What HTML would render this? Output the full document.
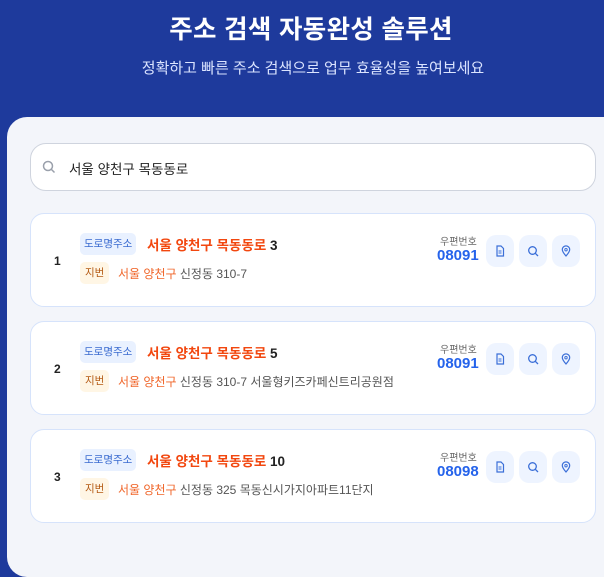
<!DOCTYPE html><html><head><meta charset="utf-8"><style>
*{margin:0;padding:0;box-sizing:border-box}
body{width:604px;height:528px;overflow:hidden;background:#1e3a9c;font-family:"Liberation Sans","Noto Sans CJK KR",sans-serif;position:relative}
h1{position:absolute;top:9px;left:0;width:622px;text-align:center;color:#fff;font-size:25.5px;font-weight:700;letter-spacing:0.3px}
.sub{position:absolute;top:57px;left:0;width:626px;text-align:center;color:#dbe4ff;font-size:15px}
.panel{position:absolute;left:7px;top:117px;width:640px;height:460px;background:#f3f5fa;border-radius:20px}
.search{position:absolute;left:30px;top:143px;width:566px;height:48px;background:#fff;border:1.5px solid #cfd4de;border-radius:16px}
.search span{position:absolute;left:38px;top:14px;font-size:13.5px;color:#222}
.search svg{position:absolute;left:11px;top:16px}
.card{position:absolute;left:30px;width:566px;height:94px;background:#fff;border:1.5px solid #d6e3fb;border-radius:14px}
.num{position:absolute;left:23px;top:40px;font-size:12px;font-weight:700;color:#222}
.b1{position:absolute;left:49px;top:19px;height:22px;padding:0 4px;line-height:22px;font-size:10.5px;color:#3a6bd0;background:#e9f1ff;border-radius:5px}
.t{position:absolute;left:116px;top:20px;font-size:13.5px;font-weight:700;color:#f2470f}
.t b{color:#222}
.b2{position:absolute;left:49px;top:48px;height:22px;padding:0 5px;line-height:22px;font-size:10.5px;color:#b45a14;background:#fff6e5;border-radius:5px}
.l2{position:absolute;left:87px;top:51px;font-size:12px;color:#555}
.l2 em{font-style:normal;color:#f0662a}
.pl{position:absolute;left:409px;top:19px;font-size:10px;color:#666}
.pn{position:absolute;left:406px;top:33px;font-size:15px;font-weight:700;color:#2563eb}
.bt{position:absolute;top:21px;width:28px;height:32px;background:#eef4ff;border-radius:10px;display:flex;align-items:center;justify-content:center}
</style></head><body>
<h1>주소 검색 자동완성 솔루션</h1>
<div class="sub">정확하고 빠른 주소 검색으로 업무 효율성을 높여보세요</div>
<div class="panel"></div>
<div class="search"><svg width="14" height="14" viewBox="0 0 14 14"><circle cx="6" cy="6" r="4.5" fill="none" stroke="#9aa0ab" stroke-width="1.5"/><path d="M9.5 9.5L12.5 12.5" stroke="#9aa0ab" stroke-width="1.5"/></svg><span>서울 양천구 목동동로</span></div>

<div class="card" style="top:213px"><div class="num">1</div><div class="b1">도로명주소</div><div class="t">서울 양천구 목동동로 <b>3</b></div><div class="b2">지번</div><div class="l2"><em>서울 양천구</em> 신정동 310-7</div><div class="pl">우편번호</div><div class="pn">08091</div>
<div class="bt" style="left:455px"><svg width="12" height="12" viewBox="0 0 12 12"><path d="M3 1h4l2.5 2.5V11H3z" fill="none" stroke="#3b6fd8" stroke-width="1.2"/><path d="M4.5 6h3M4.5 8h3" stroke="#3b6fd8"/></svg></div>
<div class="bt" style="left:488px"><svg width="12" height="12" viewBox="0 0 12 12"><circle cx="5.5" cy="5.5" r="3.8" fill="none" stroke="#3b6fd8" stroke-width="1.3"/><path d="M8.3 8.3L11 11" stroke="#3b6fd8" stroke-width="1.3"/></svg></div>
<div class="bt" style="left:521px"><svg width="12" height="12" viewBox="0 0 12 12"><path d="M6 11C3 7.5 2.3 6 2.3 4.6a3.7 3.7 0 0 1 7.4 0C9.7 6 9 7.5 6 11z" fill="none" stroke="#3b6fd8" stroke-width="1.2"/><circle cx="6" cy="4.7" r="1.2" fill="none" stroke="#3b6fd8"/></svg></div></div>

<div class="card" style="top:321px"><div class="num">2</div><div class="b1">도로명주소</div><div class="t">서울 양천구 목동동로 <b>5</b></div><div class="b2">지번</div><div class="l2"><em>서울 양천구</em> 신정동 310-7 서울형키즈카페신트리공원점</div><div class="pl">우편번호</div><div class="pn">08091</div>
<div class="bt" style="left:455px"><svg width="12" height="12" viewBox="0 0 12 12"><path d="M3 1h4l2.5 2.5V11H3z" fill="none" stroke="#3b6fd8" stroke-width="1.2"/><path d="M4.5 6h3M4.5 8h3" stroke="#3b6fd8"/></svg></div>
<div class="bt" style="left:488px"><svg width="12" height="12" viewBox="0 0 12 12"><circle cx="5.5" cy="5.5" r="3.8" fill="none" stroke="#3b6fd8" stroke-width="1.3"/><path d="M8.3 8.3L11 11" stroke="#3b6fd8" stroke-width="1.3"/></svg></div>
<div class="bt" style="left:521px"><svg width="12" height="12" viewBox="0 0 12 12"><path d="M6 11C3 7.5 2.3 6 2.3 4.6a3.7 3.7 0 0 1 7.4 0C9.7 6 9 7.5 6 11z" fill="none" stroke="#3b6fd8" stroke-width="1.2"/><circle cx="6" cy="4.7" r="1.2" fill="none" stroke="#3b6fd8"/></svg></div></div>

<div class="card" style="top:429px"><div class="num">3</div><div class="b1">도로명주소</div><div class="t">서울 양천구 목동동로 <b>10</b></div><div class="b2">지번</div><div class="l2"><em>서울 양천구</em> 신정동 325 목동신시가지아파트11단지</div><div class="pl">우편번호</div><div class="pn">08098</div>
<div class="bt" style="left:455px"><svg width="12" height="12" viewBox="0 0 12 12"><path d="M3 1h4l2.5 2.5V11H3z" fill="none" stroke="#3b6fd8" stroke-width="1.2"/><path d="M4.5 6h3M4.5 8h3" stroke="#3b6fd8"/></svg></div>
<div class="bt" style="left:488px"><svg width="12" height="12" viewBox="0 0 12 12"><circle cx="5.5" cy="5.5" r="3.8" fill="none" stroke="#3b6fd8" stroke-width="1.3"/><path d="M8.3 8.3L11 11" stroke="#3b6fd8" stroke-width="1.3"/></svg></div>
<div class="bt" style="left:521px"><svg width="12" height="12" viewBox="0 0 12 12"><path d="M6 11C3 7.5 2.3 6 2.3 4.6a3.7 3.7 0 0 1 7.4 0C9.7 6 9 7.5 6 11z" fill="none" stroke="#3b6fd8" stroke-width="1.2"/><circle cx="6" cy="4.7" r="1.2" fill="none" stroke="#3b6fd8"/></svg></div></div>
</body></html>
